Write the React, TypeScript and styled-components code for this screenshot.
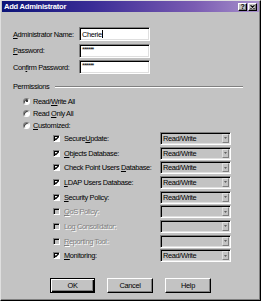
import React from 'react';
import styled, { createGlobalStyle } from 'styled-components';

const Global = createGlobalStyle`
  html, body { margin: 0; padding: 0; background: #c3c3c3; }
  body { font-family: "Liberation Sans", Arial, sans-serif; }
`;

const Window = styled.div`
  width: 261px;
  height: 301px;
  box-sizing: border-box;
  background: #c3c3c3;
  border-top: 1px solid #dfdfdf;
  border-left: 1px solid #dfdfdf;
  border-right: 1px solid #000;
  border-bottom: 1px solid #000;
  box-shadow: inset -1px -1px #808080;
  padding: 0 1px 1px 1px;
  display: flex;
  flex-direction: column;
  font-size: 7.4px;
  letter-spacing: -0.35px;
  color: #000;
  overflow: hidden;
`;

const TitleBar = styled.div`
  height: 11px;
  display: flex;
  align-items: center;
  padding: 0 2px 0 2px;
  background: linear-gradient(to right, #0c1478 0%, #3a2c96 35%, #7a5cb2 75%, #a891cc 100%);
`;

const Title = styled.div`
  flex: 1;
  color: #fff;
  font-weight: bold;
  font-size: 7.6px;
  letter-spacing: -0.25px;
`;

const TitleButton = styled.div<{ $gap?: boolean }>`
  width: 9px;
  height: 8px;
  box-sizing: border-box;
  margin-left: ${p => (p.$gap ? '1px' : '0')};
  background: #c3c3c3;
  border-top: 1px solid #fff;
  border-left: 1px solid #fff;
  border-right: 1px solid #000;
  border-bottom: 1px solid #000;
  box-shadow: inset -1px -1px #808080;
  display: flex;
  align-items: center;
  justify-content: center;
  font-weight: bold;
  font-size: 7px;
  line-height: 1;
  color: #000;
`;

const Body = styled.div`
  display: flex;
  flex-direction: column;
  padding: 0 0 0 11px;
`;

const FormGrid = styled.div`
  margin-top: 15px;
  display: grid;
  grid-template-columns: 66px 71px;
  grid-auto-rows: 14px;
  row-gap: 2.5px;
  align-items: center;
`;

const Label = styled.span<{ $disabled?: boolean }>`
  white-space: nowrap;
  color: ${p => (p.$disabled ? '#808080' : '#000')};
  text-shadow: ${p => (p.$disabled ? '1px 1px #fff' : 'none')};
`;

const TextBox = styled.div`
  height: 14px;
  box-sizing: border-box;
  background: #fff;
  border-top: 1px solid #808080;
  border-left: 1px solid #808080;
  border-right: 1px solid #fff;
  border-bottom: 1px solid #fff;
  box-shadow: inset 1px 1px #000, inset -1px -1px #dfdfdf;
  padding: 0 2px;
  display: flex;
  align-items: center;
`;

const Caret = styled.span`
  display: inline-block;
  width: 1px;
  height: 8px;
  background: #000;
  margin-left: 0.5px;
`;

const Stars = styled.span`
  align-self: flex-start;
  margin-top: 1px;
  font-size: 7px;
  letter-spacing: -0.8px;
  color: #000;
`;

const SectionHeader = styled.div`
  margin-top: 8px;
  height: 9px;
  display: flex;
  align-items: center;
`;

const Separator = styled.div`
  flex: 1;
  margin: 0 16px 0 6px;
  border-top: 1px solid #808080;
  border-bottom: 1px solid #fff;
`;

const RadioList = styled.div`
  margin-top: 4px;
  display: flex;
  flex-direction: column;
`;

const RadioRow = styled.div`
  height: 12px;
  margin-left: 10px;
  display: flex;
  align-items: center;
  gap: 3px;
`;

const RadioCircle = styled.div<{ $checked?: boolean }>`
  width: 7px;
  height: 7px;
  box-sizing: border-box;
  border-radius: 50%;
  background: #fff;
  border: 1px solid;
  border-color: #808080 #fff #fff #808080;
  box-shadow: inset 1px 1px #404040;
  display: flex;
  align-items: center;
  justify-content: center;
  &::after {
    content: '';
    width: 2px;
    height: 2px;
    border-radius: 50%;
    background: ${p => (p.$checked ? '#000' : 'transparent')};
  }
`;

const CheckList = styled.div`
  display: flex;
  flex-direction: column;
`;

const CheckRow = styled.div`
  height: 14.7px;
  margin-left: 40px;
  display: flex;
  align-items: center;
`;

const CheckBox = styled.div<{ $disabled?: boolean }>`
  width: 7px;
  height: 7px;
  box-sizing: border-box;
  margin-right: 4px;
  background: ${p => (p.$disabled ? '#c3c3c3' : '#fff')};
  border-top: 1px solid #808080;
  border-left: 1px solid #808080;
  border-right: 1px solid #fff;
  border-bottom: 1px solid #fff;
  box-shadow: inset 1px 1px #000;
  display: flex;
  align-items: center;
  justify-content: center;
`;

const CheckLabel = styled(Label)`
  flex: 0 0 96px;
`;

const Combo = styled.div`
  width: 71px;
  height: 13px;
  box-sizing: border-box;
  background: #c3c3c3;
  border-top: 1px solid #808080;
  border-left: 1px solid #808080;
  border-right: 1px solid #fff;
  border-bottom: 1px solid #fff;
  box-shadow: inset 1px 1px #000, inset -1px -1px #dfdfdf;
  padding: 1px 1px 1px 2px;
  display: flex;
  align-items: center;
`;

const ComboText = styled.span`
  flex: 1;
  white-space: nowrap;
`;

const ComboArrow = styled.div`
  width: 7px;
  height: 9px;
  box-sizing: border-box;
  background: #c3c3c3;
  border-top: 1px solid #dfdfdf;
  border-left: 1px solid #dfdfdf;
  border-right: 1px solid #808080;
  border-bottom: 1px solid #808080;
  display: flex;
  align-items: center;
  justify-content: center;
`;

const ButtonRow = styled.div`
  margin-top: 14.7px;
  margin-left: 37px;
  display: flex;
  gap: 12px;
`;

const Button = styled.div<{ $default?: boolean; $w: number }>`
  width: ${p => p.$w}px;
  height: 15px;
  box-sizing: border-box;
  background: #c3c3c3;
  border: 1px solid;
  border-color: ${p => (p.$default ? '#000' : '#fff #000 #000 #fff')};
  box-shadow: ${p =>
    p.$default
      ? 'inset 1px 1px #fff, inset -1px -1px #000, inset -2px -2px #808080'
      : 'inset -1px -1px #808080'};
  display: flex;
  align-items: center;
  justify-content: center;
`;

const Check = () => (
  <svg width="5" height="5" viewBox="0 0 5 5">
    <path d="M0.3 2.2 L1.8 3.7 L4.7 0.6" stroke="#000" strokeWidth="1.2" fill="none" />
  </svg>
);

const Arrow = () => (
  <svg width="3" height="2" viewBox="0 0 3 2">
    <path d="M0 0 H3 L1.5 2 Z" fill="#606060" />
  </svg>
);

const CloseGlyph = () => (
  <svg width="5" height="4" viewBox="0 0 5 4">
    <path d="M0.5 0.3 L4.5 3.7 M4.5 0.3 L0.5 3.7" stroke="#000" strokeWidth="1.1" />
  </svg>
);

type Perm = { pre: string; u: string; post: string; checked: boolean; disabled?: boolean; value: string };

const perms: Perm[] = [
  { pre: 'Secure', u: 'U', post: 'pdate:', checked: true, value: 'Read/Write' },
  { pre: '', u: 'O', post: 'bjects Database:', checked: true, value: 'Read/Write' },
  { pre: 'Check Point Users ', u: 'D', post: 'atabase:', checked: true, value: 'Read/Write' },
  { pre: '', u: 'L', post: 'DAP Users Database:', checked: true, value: 'Read/Write' },
  { pre: '', u: 'S', post: 'ecurity Policy:', checked: true, value: 'Read/Write' },
  { pre: '', u: 'Q', post: 'oS Policy:', checked: false, disabled: true, value: '' },
  { pre: 'Lo', u: 'g', post: ' Consolidator:', checked: false, disabled: true, value: '' },
  { pre: '', u: 'R', post: 'eporting Tool:', checked: false, disabled: true, value: '' },
  { pre: '', u: 'M', post: 'onitoring:', checked: true, value: 'Read/Write' },
];

export default function App() {
  return (
    <>
      <Global />
      <Window>
        <TitleBar>
          <Title>Add Administrator</Title>
          <TitleButton>?</TitleButton>
          <TitleButton $gap>
            <CloseGlyph />
          </TitleButton>
        </TitleBar>
        <Body>
          <FormGrid>
            <Label>
              <u>A</u>dministrator Name:
            </Label>
            <TextBox>
              <span>Cherie</span>
              <Caret />
            </TextBox>
            <Label>
              <u>P</u>assword:
            </Label>
            <TextBox>
              <Stars>******</Stars>
            </TextBox>
            <Label>
              Con<u>f</u>irm Password:
            </Label>
            <TextBox>
              <Stars>******</Stars>
            </TextBox>
          </FormGrid>

          <SectionHeader>
            <Label>Permissions</Label>
            <Separator />
          </SectionHeader>

          <RadioList>
            <RadioRow>
              <RadioCircle $checked />
              <Label>
                Read/<u>W</u>rite All
              </Label>
            </RadioRow>
            <RadioRow>
              <RadioCircle />
              <Label>
                Read <u>O</u>nly All
              </Label>
            </RadioRow>
            <RadioRow>
              <RadioCircle />
              <Label>
                <u>C</u>ustomized:
              </Label>
            </RadioRow>
          </RadioList>

          <CheckList>
            {perms.map((p, i) => (
              <CheckRow key={i}>
                <CheckBox $disabled={p.disabled}>{p.checked && <Check />}</CheckBox>
                <CheckLabel $disabled={p.disabled}>
                  {p.pre}
                  <u>{p.u}</u>
                  {p.post}
                </CheckLabel>
                <Combo>
                  <ComboText>{p.value}</ComboText>
                  <ComboArrow>
                    <Arrow />
                  </ComboArrow>
                </Combo>
              </CheckRow>
            ))}
          </CheckList>

          <ButtonRow>
            <Button $default $w={45}>OK</Button>
            <Button $w={46}>Cancel</Button>
            <Button $w={46}>Help</Button>
          </ButtonRow>
        </Body>
      </Window>
    </>
  );
}
